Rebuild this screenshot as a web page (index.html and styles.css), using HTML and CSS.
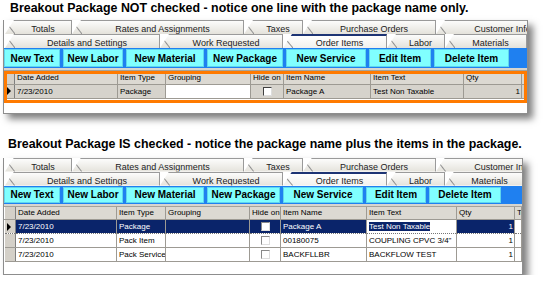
FILE: index.html
```html
<!DOCTYPE html>
<html lang="en">

<head>
    <meta charset="UTF-8">
    <meta name="viewport" content="width=device-width, initial-scale=1.0">
    <title>Breakout Package</title>
    <link rel="stylesheet" href="styles.css">
</head>

<body>
    <div class="shot shot-top">
        <h2 class="caption">Breakout Package NOT checked - notice one line with the package name only.</h2>
        <div class="window window-wide">
            <div class="tabs">
                <div class="tab tab-totals">Totals</div>
                <div class="tab tab-rates">Rates and Assignments</div>
                <div class="tab tab-taxes">Taxes</div>
                <div class="tab tab-po">Purchase Orders</div>
                <div class="tab tab-customer">Customer Info</div>
            </div>
            <div class="tabs">
                <div class="tab tab-details">Details and Settings</div>
                <div class="tab tab-work">Work Requested</div>
                <div class="tab tab-order active">Order Items</div>
                <div class="tab tab-labor">Labor</div>
                <div class="tab tab-fill">Materials</div>
            </div>
            <div class="toolbar">
                <button class="btn btn-text">New Text</button>
                <button class="btn btn-labor">New Labor</button>
                <button class="btn btn-material">New Material</button>
                <button class="btn btn-package">New Package</button>
                <button class="btn btn-service">New Service</button>
                <button class="btn btn-edit">Edit Item</button>
                <button class="btn btn-delete">Delete Item</button>
            </div>
            <div class="rule"></div>
            <table class="grid grid-a">
                <colgroup>
                    <col class="c-head"><col class="c-date"><col class="c-type"><col class="c-group"><col class="c-hide"><col class="c-name"><col class="c-text"><col class="c-qty"><col>
                </colgroup>
                <thead>
                    <tr>
                        <th class="rowhead"></th><th>Date Added</th><th>Item Type</th><th>Grouping</th><th>Hide on Invoice</th><th>Item Name</th><th>Item Text</th><th>Qty</th><th>Total</th>
                    </tr>
                </thead>
                <tbody>
                    <tr class="current">
                        <td class="rowhead"><span class="arrow"></span></td>
                        <td>7/23/2010</td>
                        <td>Package</td>
                        <td class="editing"></td>
                        <td class="check"><span class="box"></span></td>
                        <td>Package A</td>
                        <td>Test Non Taxable</td>
                        <td class="num">1</td>
                        <td></td>
                    </tr>
                </tbody>
            </table>
            <div class="grid-empty"></div>
            <div class="callout"></div>
        </div>
    </div>

    <div class="shot shot-bottom">
        <h2 class="caption">Breakout Package IS checked - notice the package name plus the items in the package.</h2>
        <div class="window window-narrow">
            <div class="tabs">
                <div class="tab tab-totals">Totals</div>
                <div class="tab tab-rates">Rates and Assignments</div>
                <div class="tab tab-taxes">Taxes</div>
                <div class="tab tab-po">Purchase Orders</div>
                <div class="tab tab-customer">Customer Info</div>
            </div>
            <div class="tabs">
                <div class="tab tab-details">Details and Settings</div>
                <div class="tab tab-work">Work Requested</div>
                <div class="tab tab-order active">Order Items</div>
                <div class="tab tab-labor">Labor</div>
                <div class="tab tab-materials">Materials</div>
                <div class="tab tab-fill"></div>
            </div>
            <div class="toolbar">
                <button class="btn btn-text">New Text</button>
                <button class="btn btn-labor">New Labor</button>
                <button class="btn btn-material">New Material</button>
                <button class="btn btn-package">New Package</button>
                <button class="btn btn-service">New Service</button>
                <button class="btn btn-edit">Edit Item</button>
                <button class="btn btn-delete">Delete Item</button>
            </div>
            <div class="rule"></div>
            <table class="grid grid-b">
                <colgroup>
                    <col class="c-head"><col class="c-date"><col class="c-type"><col class="c-group"><col class="c-hide"><col class="c-name"><col class="c-text"><col class="c-qty"><col>
                </colgroup>
                <thead>
                    <tr>
                        <th class="rowhead"></th><th>Date Added</th><th>Item Type</th><th>Grouping</th><th>Hide on Invoice</th><th>Item Name</th><th>Item Text</th><th>Qty</th><th>Total</th>
                    </tr>
                </thead>
                <tbody>
                    <tr class="selected">
                        <td class="rowhead"><span class="arrow"></span></td>
                        <td>7/23/2010</td>
                        <td>Package</td>
                        <td></td>
                        <td class="check"><span class="box"></span></td>
                        <td>Package A</td>
                        <td class="editing"><span class="sel-text">Test Non Taxable</span></td>
                        <td class="num">1</td>
                        <td class="blank"></td>
                    </tr>
                    <tr>
                        <td class="rowhead"></td>
                        <td>7/23/2010</td>
                        <td>Pack Item</td>
                        <td></td>
                        <td class="check"><span class="box"></span></td>
                        <td>00180075</td>
                        <td>COUPLING CPVC 3/4"</td>
                        <td class="num">1</td>
                        <td></td>
                    </tr>
                    <tr>
                        <td class="rowhead"></td>
                        <td>7/23/2010</td>
                        <td>Pack Service</td>
                        <td></td>
                        <td class="check"><span class="box"></span></td>
                        <td>BACKFLLBR</td>
                        <td>BACKFLOW TEST</td>
                        <td class="num">1</td>
                        <td></td>
                    </tr>
                </tbody>
            </table>
            <div class="grid-empty"></div>
        </div>
    </div>
</body>

</html>
```

FILE: styles.css
```css
* {
    margin: 0;
    padding: 0;
    box-sizing: border-box;
}
html,
body {
    background: #fff;
    font-family: 'Liberation Sans', Arial, Helvetica, sans-serif;
    color: #000;
}
body {
    width: 543px;
    padding-left: 3px;
}
.shot-bottom { margin-top: 23px; }
.caption {
    font-size: 12.4px;
    font-weight: bold;
    line-height: 15px;
    height: 15px;
    margin-top: 1px;
    white-space: nowrap;
}
.shot-top .caption { padding-left: 7px; }
.shot-bottom .caption { padding-left: 5px; }
.window {
    position: relative;
    margin-top: 4px;
    background: #fff;
    border: 1px solid #8d8d8d;
    border-top: none;
    box-shadow: 5px 5px 7px rgba(0, 0, 0, 0.5);
}
.window-wide { width: 525px; }
.window-narrow {
    width: 520px;
    margin-top: 6px;
}

/* tab strip */
.tabs {
    display: flex;
    height: 14px;
    padding-left: 1px;
    overflow: hidden;
}
.tab {
    position: relative;
    flex: 0 0 auto;
    height: 14px;
    padding: 4px 0 0 10px;
    line-height: 9px;
    text-align: center;
    white-space: nowrap;
    font-size: 9px;
    color: #222;
    background: linear-gradient(#fcfcfb, #e4e2db);
    border-top: 1px solid #9a9a9a;
    border-right: 1px solid #9a9a9a;
    clip-path: polygon(9px 0, 100% 0, 100% 100%, 0 100%);
}
.tab::before {
    content: "";
    position: absolute;
    left: 0;
    top: 0;
    width: 10px;
    height: 100%;
    background: linear-gradient(to top right, transparent calc(50% - 1px), #8f8f8f 50%, transparent calc(50% + 1px));
}
.tab.active {
    padding-top: 3px;
    background: linear-gradient(#fff, #f1f0ec);
    border-top: 2px solid #1d3474;
}
.tab-totals { width: 67px; }
.tab-rates { width: 172px; }
.tab-taxes { width: 59px; }
.tab-po { width: 133px; }
.tab-customer { width: 124px; }
.tab-details { width: 155px; }
.tab-work { width: 123px; }
.tab-order { width: 104px; }
.tab-labor { width: 58px; }
.tab-materials { width: 80px; }
.tab-fill { flex: 1 0 auto; }

/* buttons */
.toolbar {
    display: flex;
    align-items: center;
    gap: 3px;
    height: 20px;
    background: #1f80f0;
}
.btn {
    height: 18px;
    font-family: inherit;
    font-size: 10px;
    font-weight: bold;
    color: #000;
    background: #80ffff;
    border: 1px solid #5fd6ee;
}
.btn-text { width: 56px; }
.btn-labor { width: 60px; }
.btn-material { width: 78px; }
.btn-package { width: 76px; }
.btn-service { width: 80px; }
.btn-edit { width: 62px; }
.btn-delete { width: 75px; }
.window-narrow .toolbar { height: 18px; }
.window-narrow .btn { height: 16px; }
.window-narrow .btn-package { width: 73px; }
.window-narrow .btn-service { width: 80px; }
.window-narrow .btn-edit { width: 60px; }
.window-narrow .btn-delete { width: 72px; }

.rule {
    height: 3px;
    background: #d8d5ce;
    border-bottom: 1px solid #a5a29b;
}

/* grid */
.grid {
    width: 100%;
    table-layout: fixed;
    border-collapse: collapse;
    font-size: 8px;
}
.grid th,
.grid td {
    height: 14px;
    padding: 0 1px 0 2px;
    text-align: left;
    font-weight: normal;
    white-space: nowrap;
    overflow: hidden;
    border-right: 1px solid #9d9a93;
    border-bottom: 1px solid #9d9a93;
}
.grid th {
    height: 13px;
    background: #dcd9d2;
    border-left: 1px solid #fff;
}
.grid td { background: #fff; }
.grid .rowhead {
    padding: 0;
    background: #d4d0c8;
    border-right: 1px solid #7f7f7f;
}
.grid .num { text-align: right; }
.grid .check { text-align: center; }
.grid-a .c-head { width: 10px; }
.grid-a .c-date { width: 103px; }
.grid-a .c-type { width: 48px; }
.grid-a .c-group { width: 85px; }
.grid-a .c-hide { width: 33px; }
.grid-a .c-name { width: 87px; }
.grid-a .c-text { width: 93px; }
.grid-a .c-qty { width: 58px; }
.grid-b .c-head { width: 11px; }
.grid-b .c-date { width: 101px; }
.grid-b .c-type { width: 49px; }
.grid-b .c-group { width: 84px; }
.grid-b .c-hide { width: 31px; }
.grid-b .c-name { width: 86px; }
.grid-b .c-text { width: 90px; }
.grid-b .c-qty { width: 58px; }

.arrow {
    display: block;
    width: 0;
    height: 0;
    margin-left: 2px;
    border-top: 4px solid transparent;
    border-bottom: 4px solid transparent;
    border-left: 4px solid #000;
}
.box {
    display: inline-block;
    width: 9px;
    height: 9px;
    vertical-align: middle;
    background: #fff;
    border: 1px solid #8a8a8a;
    border-right-color: #ddd;
    border-bottom-color: #ddd;
}
.current td { background: #d6d3cc; }
.current .box { border-color: #404040 #ddd #ddd #404040; }
.current td.editing { background: #fff; }
.selected td {
    background: #0a246a;
    color: #fff;
    border-bottom: 1px dotted #777;
}
.selected td.rowhead { background: #d4d0c8; }
.selected td.editing,
.selected td.blank {
    background: #fff;
    color: #000;
}
.sel-text {
    background: #0a246a;
    color: #fff;
}
.grid-empty { height: 14px; }
.window-narrow .grid-empty { height: 12px; }

/* annotation drawn over the grid */
.callout {
    position: absolute;
    left: 0;
    right: 0;
    top: 51px;
    height: 32px;
    border: 3px solid #ff7a00;
}
```
